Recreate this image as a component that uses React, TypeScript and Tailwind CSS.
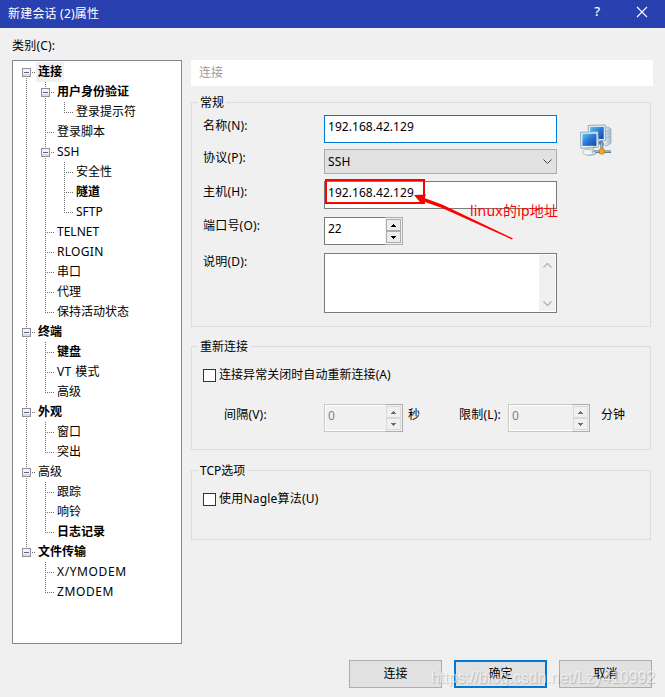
import type { ReactNode } from 'react';

type TreeRow = {
  label: string;
  // one entry per indent level: line = passes by, mid/end = leaf, box* = expander, none = empty
  cells: string[];
  bold?: boolean;
  selected?: boolean;
  tracking?: string;
};

const rows: TreeRow[] = [
  { label: '连接', cells: ['boxFirst'], bold: true, selected: true },
  { label: '用户身份验证', cells: ['line', 'box'], bold: true },
  { label: '登录提示符', cells: ['line', 'line', 'end'] },
  { label: '登录脚本', cells: ['line', 'mid'] },
  { label: 'SSH', cells: ['line', 'box'], tracking: 'tracking-[0.2px]' },
  { label: '安全性', cells: ['line', 'line', 'mid'] },
  { label: '隧道', cells: ['line', 'line', 'mid'], bold: true },
  { label: 'SFTP', cells: ['line', 'line', 'end'] },
  { label: 'TELNET', cells: ['line', 'mid'] },
  { label: 'RLOGIN', cells: ['line', 'mid'], tracking: 'tracking-[0.3px]' },
  { label: '串口', cells: ['line', 'mid'] },
  { label: '代理', cells: ['line', 'mid'] },
  { label: '保持活动状态', cells: ['line', 'end'] },
  { label: '终端', cells: ['box'], bold: true },
  { label: '键盘', cells: ['line', 'mid'], bold: true },
  { label: 'VT 模式', cells: ['line', 'mid'], tracking: 'tracking-[0.4px]' },
  { label: '高级', cells: ['line', 'end'] },
  { label: '外观', cells: ['box'], bold: true },
  { label: '窗口', cells: ['line', 'mid'] },
  { label: '突出', cells: ['line', 'end'] },
  { label: '高级', cells: ['box'] },
  { label: '跟踪', cells: ['line', 'mid'] },
  { label: '响铃', cells: ['line', 'mid'] },
  { label: '日志记录', cells: ['line', 'end'], bold: true },
  { label: '文件传输', cells: ['boxLast'], bold: true },
  { label: 'X/YMODEM', cells: ['none', 'mid'], tracking: 'tracking-[0.6px]' },
  { label: 'ZMODEM', cells: ['none', 'end'], tracking: 'tracking-[0.6px]' },
];

function TreeCell({ kind }: { kind: string }) {
  const isBox = kind.startsWith('box');
  const top = kind !== 'none' && kind !== 'boxFirst';
  const bottom = kind === 'line' || kind === 'mid' || kind === 'box' || kind === 'boxFirst';
  return (
    <svg width="19" height="20" className="shrink-0" shapeRendering="crispEdges">
      <g stroke="#6e6e6e" strokeDasharray="1 1">
        {top && <path d="M9.5 0V11" />}
        {bottom && <path d="M9.5 10V20" />}
        {(kind === 'mid' || kind === 'end') && <path d="M9 10.5H18" />}
        {isBox && <path d="M15 10.5H18" />}
      </g>
      {isBox && (
        <>
          <rect x="5.5" y="6.5" width="8" height="8" rx="1" fill="#f4f4f4" stroke="#919191" />
          <path d="M6 12.5H13M6 13.5H13" stroke="#dedede" />
          <path d="M7 10.5H12" stroke="#4b63a7" />
        </>
      )}
    </svg>
  );
}

function Tree() {
  return (
    <div className="h-[584px] w-[170px] border border-[#828790] bg-white pt-px pl-1">
      {rows.map((row, i) => (
        <div key={i} className="flex h-5 items-center">
          {row.cells.map((kind, j) => (
            <TreeCell key={j} kind={kind} />
          ))}
          <span className={`h-5 px-0.5 leading-5 whitespace-nowrap ${row.tracking ?? ''} ${row.bold ? 'font-bold' : ''} ${row.selected ? 'bg-[#f0f0f0]' : ''}`}>
            {row.label}
          </span>
        </div>
      ))}
    </div>
  );
}

function Group({ title, className, children }: { title: string; className: string; children: ReactNode }) {
  return (
    <section className={`relative w-[460px] border border-[#dcdcdc] ${className}`}>
      <h2 className="absolute -top-[9px] left-[6px] bg-[#f0f0f0] px-0.5 leading-[17px]">{title}</h2>
      {children}
    </section>
  );
}

function Spinner({ value, className, disabled }: { value: string; className: string; disabled?: boolean }) {
  const color = disabled ? '#6d6d6d' : '#000';
  return (
    <div className={`flex h-7 border ${className} ${disabled ? 'border-[#c8c8c8] bg-[#f0f0f0] text-[#838383] shadow-[inset_0_0_0_1px_#fff]' : 'border-[#7a7a7a] bg-white'}`}>
      <span className={`flex-1 pl-[3px] ${disabled ? 'leading-[22px]' : 'leading-[21px]'}`}>{value}</span>
      <div className="-my-px -mr-px flex w-[18px] flex-col border border-l-0 border-[#adadad] bg-[#f0f0f0] p-px">
        {[0, 1].map((n) => (
          <div key={n} className={`flex flex-1 items-center justify-center border ${disabled ? 'border-[#d9d9d9]' : 'border-[#acacac] bg-[#ececec]'}`}>
            <svg width="5" height="3" shapeRendering="crispEdges">
              <path d={n === 0 ? 'M2 0H3V1H4V2H5V3H0V2H1V1H2Z' : 'M0 0H5V1H4V2H3V3H2V2H1V1H0Z'} fill={color} />
            </svg>
          </div>
        ))}
      </div>
    </div>
  );
}

function CheckRow({ label, className }: { label: string; className: string }) {
  return (
    <div className={`flex items-center gap-[3px] ${className}`}>
      <span className="size-[13px] border border-[#333] bg-white" />
      <span className="leading-4">{label}</span>
    </div>
  );
}

function NetworkIcon() {
  return (
    <svg width="33" height="33" viewBox="0 0 34 34">
      <defs>
        <linearGradient id="screen" x1="0" y1="0" x2="1" y2="1">
          <stop offset="0" stopColor="#62c5f4" />
          <stop offset=".5" stopColor="#2778d4" />
          <stop offset="1" stopColor="#1746ae" />
        </linearGradient>
        <linearGradient id="tower" x1="0" y1="0" x2="1" y2="0">
          <stop offset="0" stopColor="#f8fbfd" />
          <stop offset="1" stopColor="#a3b7c8" />
        </linearGradient>
      </defs>
      <path d="M25 4L30 3L33 5V20L28 23L24 21Z" fill="url(#tower)" stroke="#9fb2c0" strokeWidth=".8" />
      <path d="M28 8L32 7M28 11L32 10M28 14L32 13" stroke="#8da4b6" strokeWidth=".7" />
      <path d="M9.5 1.5L27 1L27.5 17L10 18Z" fill="#e7eff5" stroke="#94aabc" />
      <path d="M11.5 3H25.5V15.5H11.5Z" fill="url(#screen)" />
      <path d="M20 18L24 17L26 21H20Z" fill="#5f7c98" />
      <path d="M23.5 19V28M13 28.5H33" stroke="#607c90" strokeWidth="3" />
      <path d="M23.5 19V28M13 28H33" stroke="#b6cad7" strokeWidth="1" />
      <path d="M9 23H14L15 28Q18 29 17 31Q13 33 9 32Q6 31 9 28Z" fill="#dce6ec" stroke="#8299a8" strokeWidth=".8" />
      <ellipse cx="9" cy="29" rx="5" ry="3" fill="#eff3f5" stroke="#a2b0b9" strokeWidth=".8" />
      <path d="M1.5 8.5L19.5 8L20 24L2 25Z" fill="#edf3f7" stroke="#91a8b9" />
      <path d="M3.5 10H18V22.5H3.5Z" fill="url(#screen)" />
      <path d="M15 23.5H17" stroke="#72bd37" />
      <rect x="21" y="25.5" width="5" height="5.5" rx="1" fill="#f8a51a" stroke="#d6791e" strokeWidth=".8" />
    </svg>
  );
}

const field = 'w-[233px] border pl-[3px]';

export default function App() {
  return (
    <div className="relative h-[697px] w-[665px] overflow-hidden bg-[#f0f0f0] font-['Noto_Sans','Noto_Sans_CJK_SC',sans-serif] text-[12px] text-black">
      <header className="flex h-7 items-center bg-[#2840b0] pl-2 text-white">
        <h1 className="flex-1 pb-px tracking-[0.2px]">新建会话 (2)属性</h1>
        <span className="mr-9 pb-1 text-[13px] font-medium">?</span>
        <svg width="12" height="12" className="mr-[17px] -translate-y-0.5" stroke="currentColor" strokeWidth="1.1">
          <path d="M1 1L11 11M11 1L1 11" />
        </svg>
      </header>

      <div className="h-8 pt-[9px] pl-3 leading-[18px] tracking-[0.2px]">类别(C):</div>

      <main className="flex pl-3">
        <Tree />
        <div className="ml-[9px] w-[462px]">
          <div className="h-[26px] bg-white pl-2 leading-[26px] text-[#9b9b9b]">连接</div>

          <Group title="常规" className="mt-4 h-[225px] pt-3 pl-[11px]">
            <div className="flex">
              <div className="w-[121px] leading-[18px] tracking-[0.2px]">
                <div className="mt-0.5 h-8">名称(N):</div>
                <div className="h-[34px]">协议(P):</div>
                <div className="h-[34px]">主机(H):</div>
                <div className="h-9">端口号(O):</div>
                <div>说明(D):</div>
              </div>
              <div className="w-[233px]">
                <div className={`${field} h-7 border-[#0078d7] bg-white leading-[21px] tracking-[0.05px]`}>192.168.42.129</div>
                <div className={`${field} mt-1.5 flex h-[25px] items-center justify-between border-[#adadad] bg-[#e1e1e1] pr-1`}>
                  <span className="tracking-[0.2px]">SSH</span>
                  <svg width="9" height="6" fill="none" stroke="#444">
                    <path d="M.5 .5L4.5 4.5L8.5 .5" />
                  </svg>
                </div>
                <div className={`${field} relative mt-[7px] h-7 border-[#7a7a7a] bg-white leading-[22px] tracking-[0.05px]`}>
                  192.168.42.129
                  <div className="absolute -top-[3px] left-0 h-[25px] w-[100px] border-2 border-[#f00]" />
                  <span className="absolute top-[19px] left-[145px] text-[14px] leading-[20px] tracking-[0.2px] whitespace-nowrap text-[#f00]">linux的ip地址</span>
                  <svg width="104" height="48" className="absolute top-[11px] left-[87px]" fill="#f00">
                    <path d="M2 2L14 1.5L12.5 5L30 11.5L101 45.5L100 46.5L30 15L11.5 8.5L10 11.5Z" />
                  </svg>
                </div>
                <Spinner value="22" className="mt-2 w-[79px]" />
                <div className="mt-2 flex h-[60px] justify-end border border-[#7a7a7a] bg-white p-px">
                  <div className="flex w-4 flex-col items-center justify-between bg-[#f0f0f0] pt-2 pb-1">
                    {['M.5 4.5L4.5 .5L8.5 4.5', 'M.5 .5L4.5 4.5L8.5 .5'].map((d) => (
                      <svg key={d} width="9" height="6" fill="none" stroke="#b5b5b5" strokeWidth="1.4">
                        <path d={d} />
                      </svg>
                    ))}
                  </div>
                </div>
              </div>
              <div className="pt-[9px] pl-[22px]">
                <NetworkIcon />
              </div>
            </div>
          </Group>

          <Group title="重新连接" className="mt-[19px] h-[104px]">
            <CheckRow label="连接异常关闭时自动重新连接(A)" className="mt-5 ml-[11px] tracking-[0.05px]" />
            <div className="mt-[21px] flex pl-8 leading-[21px]">
              <span className="w-[100px] tracking-[0.2px]">间隔(V):</span>
              <Spinner value="0" disabled className="w-[79px]" />
              <span className="w-14 pl-[5px]">秒</span>
              <span className="w-[49px] shrink-0 tracking-[0.2px]">限制(L):</span>
              <Spinner value="0" disabled className="w-[82px]" />
              <span className="pl-[11px]">分钟</span>
            </div>
          </Group>

          <Group title="TCP选项" className="mt-5 h-[70px]">
            <CheckRow label="使用Nagle算法(U)" className="mt-5 ml-[11px] tracking-[0.2px]" />
          </Group>
        </div>
      </main>

      <footer className="relative mt-4 flex justify-end gap-3 pr-[13px]">
        <button className="h-7 w-[93px] border border-[#adadad] bg-[#e1e1e1]">连接</button>
        <button className="h-7 w-[93px] border-2 border-[#0078d7] bg-[#e1e1e1]">确定</button>
        <button className="h-7 w-[93px] border border-[#adadad] bg-[#e1e1e1]">取消</button>
        <span className="absolute top-[8px] left-[431px] font-['Liberation_Sans',sans-serif] text-[16px] leading-5 tracking-[-0.06px] whitespace-nowrap text-white/60 [text-shadow:1px_1px_1px_#00000030]">
          https://blog.csdn.net/Lzy410992
        </span>
      </footer>
    </div>
  );
}
